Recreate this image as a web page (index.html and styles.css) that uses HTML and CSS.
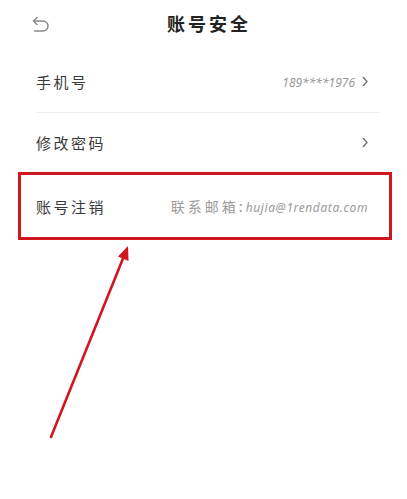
FILE: index.html
```html
<!DOCTYPE html>
<html>
<head>
    <meta charset="UTF-8">
    <title>账号安全</title>
    <link rel="stylesheet" href="styles.css">
</head>

<body>
<header class="nav">
    <span class="nav-back">
        <svg width="17" height="17" viewBox="0 0 17 17">
            <path d="M5 1.5 L1.5 5 L5 8.5" fill="none" stroke="#8a8a8a" stroke-width="1.5" stroke-linecap="round" stroke-linejoin="round"/>
            <path d="M1.8 5 H11 A5 5 0 0 1 11 15 H2.5" fill="none" stroke="#8a8a8a" stroke-width="1.5" stroke-linecap="round"/>
        </svg>
    </span>
    <h1>账号安全</h1>
</header>

<main class="list">
    <div class="row row-line">
        <span class="row-label">手机号</span>
        <span class="row-value">
            <span class="phone">189****1976</span>
            <svg class="chevron" width="6" height="11" viewBox="0 0 6 11"><path d="M1 1 L5 5.5 L1 10" fill="none" stroke="#666" stroke-width="1.2"/></svg>
        </span>
    </div>
    <div class="row">
        <span class="row-label">修改密码</span>
        <span class="row-value">
            <svg class="chevron" width="6" height="11" viewBox="0 0 6 11"><path d="M1 1 L5 5.5 L1 10" fill="none" stroke="#666" stroke-width="1.2"/></svg>
        </span>
    </div>
    <div class="mark">
        <div class="row row-inner">
            <span class="row-label">账号注销</span>
            <span class="contact"><span class="contact-cn">联系邮箱:</span><span class="contact-mail">hujia@1rendata.com</span></span>
        </div>
    </div>
</main>

<!-- pointer drawn over the page -->
<svg class="pointer" width="407" height="499" viewBox="0 0 407 499">
    <line x1="51" y1="437" x2="124" y2="256" stroke="#d0161e" stroke-width="2.6" stroke-linecap="round"/>
    <polygon points="128,246 128.5,261 118,256.5" fill="#d0161e"/>
</svg>
</body>
</html>
```

FILE: styles.css
```css
body {
    margin: 0;
    padding: 0;
    background-color: #fff;
    font-family: "Noto Sans CJK SC", "Noto Sans", sans-serif;
    color: #333;
    position: relative;
    width: 407px;
    height: 499px;
    overflow: hidden;
}

.nav {
    height: 46px;
    display: flex;
    align-items: center;
    justify-content: center;
    position: relative;
}

.nav-back {
    position: absolute;
    left: 32px;
    top: 14px;
    width: 17px;
    height: 17px;
}

.nav h1 {
    margin: 0;
    font-size: 18px;
    font-weight: bold;
    letter-spacing: 3px;
    color: #222;
    padding-left: 11px;
}

.list {
    padding-top: 5px;
}

.row {
    margin: 0 27px 0 36px;
    height: 61px;
    display: flex;
    align-items: center;
    justify-content: space-between;
    padding-right: 12px;
}

.row-line {
    border-bottom: 1px solid #eeeeee;
}

.row + .row {
    height: 59px;
}

.row-label {
    font-size: 15px;
    letter-spacing: 2.5px;
    color: #3a3a3a;
}

.row-value {
    display: flex;
    align-items: center;
    gap: 7px;
}

.phone {
    font-family: "Noto Sans", sans-serif;
    font-style: italic;
    font-size: 12px;
    color: #999;
    margin-top: 2px;
}

.chevron {
    display: block;
}

.mark {
    margin: 0 15px 0 18px;
    border: 3px solid #d0161e;
}

.row-inner {
    margin: 0 0 0 15px;
    height: 62px;
    padding-right: 21px;
}

.contact {
    color: #9a9a9a;
    display: flex;
    align-items: baseline;
}

.contact-cn {
    font-size: 14px;
    letter-spacing: 3px;
}

.contact-mail {
    font-family: "Noto Sans", sans-serif;
    font-style: italic;
    font-size: 12px;
    letter-spacing: 0.6px;
}

.pointer {
    position: absolute;
    left: 0;
    top: 0;
    pointer-events: none;
}
```
